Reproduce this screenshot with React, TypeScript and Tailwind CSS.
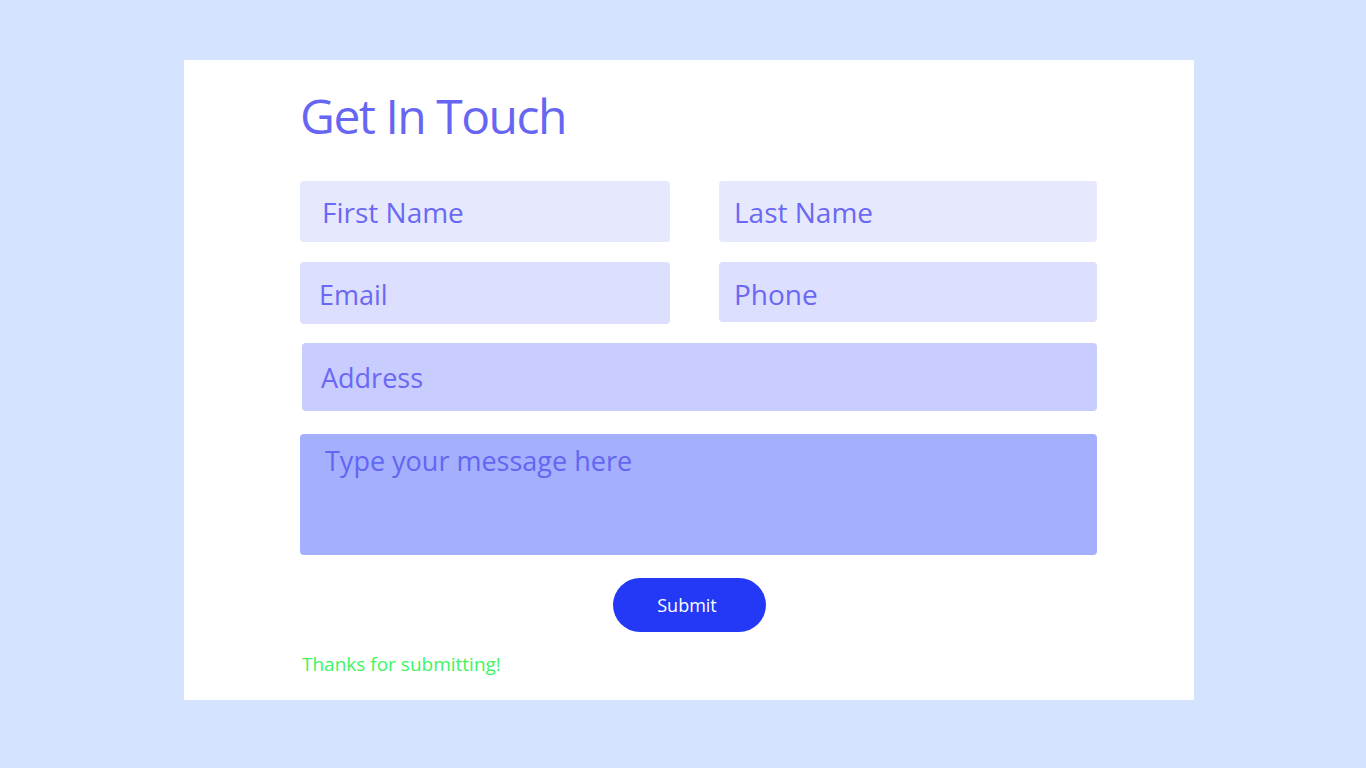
import React from "react";

export default function App() {
  const font = "font-['Open_Sans',sans-serif]";
  return (
    <div className={`min-h-[768px] w-full bg-[#d4e4fe] pt-[60px] ${font}`}>
      <div className="ml-[184px] h-[640px] w-[1010px] bg-white pl-[116px] pt-[32px]">
        <h1 className="text-[48px] leading-none font-normal text-[#6766f3] tracking-[-1.5px] h-[48px]">
          Get In Touch
        </h1>
        <div className="mt-[41px] flex w-[797px] gap-[49px]">
          <input
            placeholder="First Name"
            className="h-[61px] w-[370px] rounded-[4px] bg-[#e6e8fd] pl-[22px] text-[28px] text-[#6766f3] placeholder:text-[#6a68f4] outline-none"
          />
          <input
            placeholder="Last Name"
            className="h-[61px] w-[378px] rounded-[4px] bg-[#e6e8fd] pl-[15px] text-[28px] text-[#6766f3] placeholder:text-[#6a68f4] outline-none"
          />
        </div>
        <div className="mt-[20px] flex w-[797px] items-start gap-[49px]">
          <input
            placeholder="Email"
            className="h-[62px] w-[370px] rounded-[4px] bg-[#dcdffd] pl-[19px] pt-[2px] text-[27px] text-[#6766f3] placeholder:text-[#6a68f4] outline-none"
          />
          <input
            placeholder="Phone"
            className="h-[60px] w-[378px] rounded-[4px] bg-[#dcdffd] pl-[15px] pt-[3px] text-[28px] text-[#6766f3] placeholder:text-[#6a68f4] outline-none"
          />
        </div>
        <input
          placeholder="Address"
          className="mt-[19px] ml-[2px] block h-[68px] w-[795px] rounded-[4px] bg-[#c8ccfe] pl-[19px] text-[27px] text-[#6766f3] placeholder:text-[#6a68f4] outline-none"
        />
        <textarea
          placeholder="Type your message here"
          className="mt-[23px] block h-[121px] w-[797px] resize-none rounded-[4px] bg-[#a4affe] pl-[25px] pt-[7px] text-[27px] text-[#6766f3] placeholder:text-[#6366f1] outline-none"
        />
        <button className="mt-[23px] ml-[313px] block h-[54px] w-[153px] rounded-full bg-[#2339f6] pr-[5px] text-[18px] text-white">
          Submit
        </button>
        <p className="mt-[20px] ml-[2px] text-[19px] leading-[24px] text-[#3ef560]">
          Thanks for submitting!
        </p>
      </div>
    </div>
  );
}
